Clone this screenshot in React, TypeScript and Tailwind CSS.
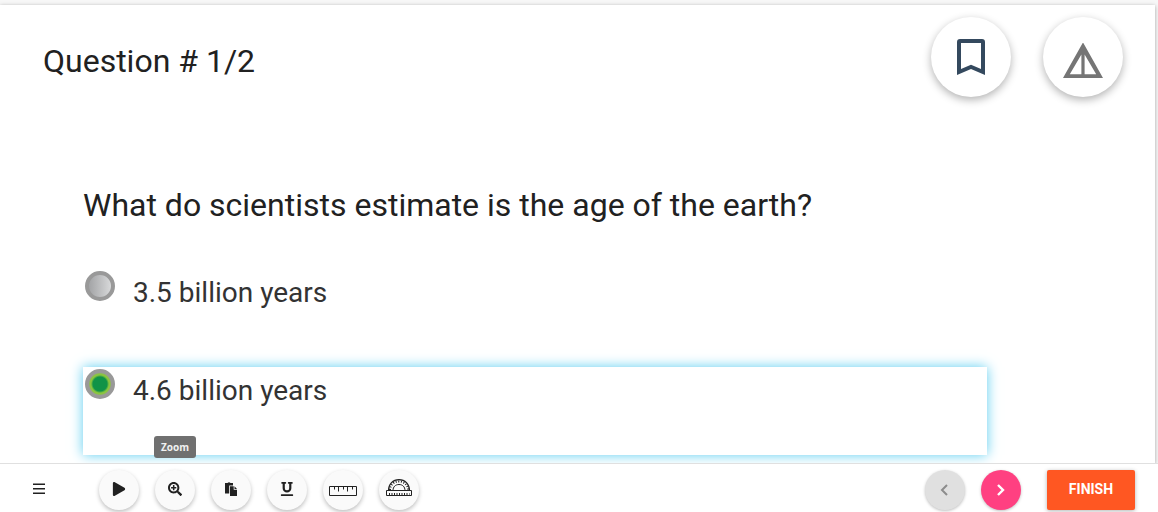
import { useState } from 'react';
import { FaPlay, FaSearchPlus, FaUnderline } from 'react-icons/fa';

const answers = [
  { id: 'a', text: '3.5 billion years' },
  { id: 'b', text: '4.6 billion years' },
];

function BookmarkIcon() {
  return (
    <svg viewBox="0 0 28 36" className="h-9 w-7" fill="#34495e" aria-hidden="true">
      <path
        fillRule="evenodd"
        d="M3 0H25Q28 0 28 3V36L14 30L0 36V3Q0 0 3 0ZM4 4V30L14 25.8L24 30V4Z"
      />
    </svg>
  );
}

function FlagIcon() {
  return (
    <svg viewBox="0 0 40 36" className="h-9 w-10" fill="#757575" aria-hidden="true">
      <path fillRule="evenodd" d="M20 -0.6L40 35H0ZM18.4 11.5L6.8 31.2H18.4ZM21.6 11.5V31.2H33.2Z" />
    </svg>
  );
}

function PasteIcon() {
  return (
    <svg viewBox="0 0 14 14" className="size-[14px]" fill="#212121" aria-hidden="true">
      <path d="M1 1H3.5Q5 -0.6 6.5 1H9V3.5H5.2V11.5H1Z" />
      <path d="M6 4.3H9.7V7.7H13V14H6Z" />
      <path d="M10.5 4.3L13 6.9H10.5Z" />
    </svg>
  );
}

function RulerIcon() {
  return (
    <svg viewBox="0 0 28 14" className="h-[14px] w-7" fill="none" stroke="#212121" aria-hidden="true">
      <path d="M0.5 4.5H27.5V13.5H0.5Z" />
      <path d="M5.5 5V7.5M9.5 5V9.5M14.5 5V7.5M18.5 5V9.5M23.5 5V7.5" />
    </svg>
  );
}

function ProtractorIcon() {
  return (
    <svg viewBox="0 0 26 20" className="h-5 w-[26px]" fill="none" stroke="#212121" aria-hidden="true">
      <path d="M0.5 11.5H25.5V16.5H0.5Z" />
      <path d="M2.5 11.5C2.5 5 7 0.7 13 0.7S23.5 5 23.5 11.5" strokeWidth="1.2" />
      <path d="M7 11.5C7 7.8 9.5 5.5 13 5.5S19 7.8 19 11.5" />
      <path d="M4 11C4 6 8 2.5 13 2.5S22 6 22 11" strokeDasharray="1 1.6" strokeWidth="2" />
      <path d="M3 15H23.5" strokeDasharray="1 1.5" strokeWidth="2" />
    </svg>
  );
}

const tools = [
  { name: 'Play', icon: <FaPlay className="size-[14px]" /> },
  { name: 'Zoom', icon: <FaSearchPlus className="size-[14px]" /> },
  { name: 'Paste', icon: <PasteIcon /> },
  { name: 'Underline', icon: <FaUnderline className="size-[14px]" /> },
  { name: 'Ruler', icon: <RulerIcon /> },
  { name: 'Protractor', icon: <ProtractorIcon /> },
];

export default function App() {
  const [selected, setSelected] = useState('b');
  const [hovered, setHovered] = useState('Zoom');

  return (
    <div className="flex h-screen flex-col bg-[#f7f7f7] font-[Roboto,sans-serif] text-[#212121]">
      <main className="mt-[5px] mr-[3px] min-h-0 flex-1 overflow-hidden bg-white shadow-[0_1px_4px_rgba(0,0,0,0.35)]">
        <header className="flex items-start justify-between pt-3 pr-8 pl-[43px]">
          <h1 className="pt-6 text-[32px] leading-10">Question # 1/2</h1>
          <div className="flex gap-8">
            <button
              aria-label="Bookmark"
              className="flex size-20 items-center justify-center rounded-full bg-white shadow-[0_3px_8px_rgba(0,0,0,0.3)]"
            >
              <BookmarkIcon />
            </button>
            <button
              aria-label="Flag"
              className="flex size-20 items-center justify-center rounded-full bg-white pt-2 shadow-[0_3px_8px_rgba(0,0,0,0.3)]"
            >
              <FlagIcon />
            </button>
          </div>
        </header>

        <fieldset className="mt-22 pr-42 pl-[83px]">
          <legend className="text-[32px] leading-10">What do scientists estimate is the age of the earth?</legend>
          <div className="mt-11 flex flex-col gap-[10px]">
            {answers.map((answer) => (
              <label
                key={answer.id}
                htmlFor={answer.id}
                className={`flex h-22 items-start gap-[18px] p-[2px] text-[28px] leading-10 text-[#333] ${
                  selected === answer.id ? 'shadow-[0_0_12px_#5bcdf0]' : ''
                }`}
              >
                <input
                  type="radio"
                  id={answer.id}
                  name="answer"
                  checked={selected === answer.id}
                  onChange={() => setSelected(answer.id)}
                  className="size-[30px] shrink-0 appearance-none rounded-full border-4 border-[#999] bg-linear-to-r from-[#a3a4a6] to-[#d8d9da] checked:bg-[radial-gradient(circle,#109347_7px,#8bc53f_9px,#8bc53f_10px,#999_12px)]"
                />
                <span className="pt-[2px]">{answer.text}</span>
              </label>
            ))}
          </div>
        </fieldset>
      </main>

      <footer className="relative flex items-center border-t border-[#e0e0e0] bg-white pt-[6px] pr-[23px] pb-[2px] pl-8">
        <button aria-label="Menu" className="flex h-10 w-[14px] items-center justify-center pb-[2px]">
          <svg viewBox="0 0 12 12" className="size-3" fill="#212121" aria-hidden="true">
            <path d="M0 0.5H12V2H0ZM0 5H12V6.5H0ZM0 9.5H12V11H0Z" />
          </svg>
        </button>
        <div className="ml-[53px] flex gap-4">
          {tools.map((tool) => (
            <div key={tool.name} className="relative">
              <button
                aria-label={tool.name}
                onMouseEnter={() => setHovered(tool.name)}
                className="flex size-10 items-center justify-center rounded-full bg-[#fafafa] pb-[2px] shadow-[0_2px_4px_rgba(0,0,0,0.25)]"
              >
                {tool.icon}
              </button>
              {hovered === tool.name && (
                <span
                  role="tooltip"
                  className="absolute bottom-13 left-1/2 -translate-x-1/2 rounded-[3px] bg-[#707070] px-[7px] font-['Open_Sans',sans-serif] text-[10px] leading-[22px] font-bold text-[#f1f1f1]"
                >
                  {tool.name}
                </span>
              )}
            </div>
          ))}
        </div>
        <div className="ml-auto flex items-center gap-4">
          <button
            aria-label="Previous"
            disabled
            className="flex size-10 items-center justify-center rounded-full bg-[#e0e0e0] pr-[2px] shadow-[0_1px_3px_rgba(0,0,0,0.25)]"
          >
            <svg viewBox="0 0 8 12" className="h-3 w-2" fill="none" stroke="#8c8c8c" strokeWidth="2" aria-hidden="true">
              <path d="M7 1L2 6L7 11" />
            </svg>
          </button>
          <button
            aria-label="Next"
            className="flex size-10 items-center justify-center rounded-full bg-[#ff4081] shadow-[0_1px_3px_rgba(0,0,0,0.25)]"
          >
            <svg viewBox="0 0 8 12" className="h-3 w-2" fill="none" stroke="#fff" strokeWidth="2.4" aria-hidden="true">
              <path d="M1 1L6 6L1 11" />
            </svg>
          </button>
          <button className="ml-[10px] h-10 w-22 rounded-[2px] bg-[#ff5722] pb-[2px] text-sm font-bold text-white shadow-[0_1px_4px_rgba(0,0,0,0.3)]">
            FINISH
          </button>
        </div>
      </footer>
    </div>
  );
}
